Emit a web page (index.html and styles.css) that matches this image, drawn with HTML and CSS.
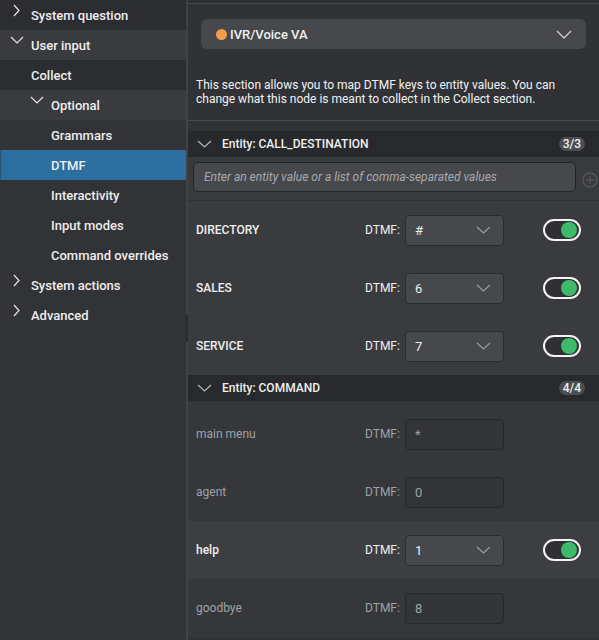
FILE: index.html
```html
<!DOCTYPE html>
<html lang="en">
<head>
    <meta charset="UTF-8">
    <meta name="viewport" content="width=device-width, initial-scale=1.0">
    <title>DTMF mapping</title>
    <link rel="stylesheet" href="styles.css">
</head>
<body>
<div class="app">
    <div class="sidebar">
        <div class="nav-item band-dark lvl-1">
            <span class="caret"><svg class="caret-right" width="7" height="13" viewBox="0 0 7 13"><polyline points="1,1 6,6.5 1,12"/></svg></span>
            System question
        </div>
        <div class="nav-item band-light lvl-1">
            <span class="caret"><svg class="caret-down" width="14" height="8" viewBox="0 0 14 8"><polyline points="1,1 7,7 13,1"/></svg></span>
            User input
        </div>
        <div class="nav-item band-dark lvl-2">Collect</div>
        <div class="nav-item band-light lvl-2b">
            <span class="caret"><svg class="caret-down" width="14" height="8" viewBox="0 0 14 8"><polyline points="1,1 7,7 13,1"/></svg></span>
            Optional
        </div>
        <div class="nav-item lvl-3">Grammars</div>
        <div class="nav-item lvl-3 selected">DTMF</div>
        <div class="nav-item lvl-3">Interactivity</div>
        <div class="nav-item lvl-3">Input modes</div>
        <div class="nav-item lvl-3">Command overrides</div>
        <div class="nav-item lvl-1">
            <span class="caret"><svg class="caret-right" width="7" height="13" viewBox="0 0 7 13"><polyline points="1,1 6,6.5 1,12"/></svg></span>
            System actions
        </div>
        <div class="nav-item lvl-1">
            <span class="caret"><svg class="caret-right" width="7" height="13" viewBox="0 0 7 13"><polyline points="1,1 6,6.5 1,12"/></svg></span>
            Advanced
        </div>
        <span class="scroll-thumb"></span>
    </div>

    <div class="main">
        <div class="panel">
            <div class="intro">
                <div class="channel">
                    <span class="dot"></span>
                    <span class="channel-name">IVR/Voice VA</span>
                    <svg class="channel-caret" width="16" height="9" viewBox="0 0 16 9"><polyline points="1,1 8,8 15,1"/></svg>
                </div>
                <p class="desc">This section allows you to map DTMF keys to entity values. You can<br>change what this node is meant to collect in the Collect section.</p>
            </div>

            <div class="entity-header">
                <svg class="entity-caret" width="15" height="8" viewBox="0 0 15 8"><polyline points="1,1 7.5,7 14,1"/></svg>
                <span class="entity-title">Entity: CALL_DESTINATION</span>
                <span class="badge">3/3</span>
            </div>
            <div class="value-bar">
                <input class="value-input" type="text" placeholder="Enter an entity value or a list of comma-separated values">
                <svg class="add-icon" width="16" height="16" viewBox="0 0 16 16">
                    <circle cx="8" cy="8" r="7"/>
                    <line x1="8" y1="4" x2="8" y2="12"/>
                    <line x1="4" y1="8" x2="12" y2="8"/>
                </svg>
            </div>
            <div class="rows rows-dest">
                <div class="row">
                    <span class="row-label">DIRECTORY</span>
                    <span class="dtmf-label">DTMF:</span>
                    <div class="key-select"><span>#</span><svg width="15" height="8" viewBox="0 0 15 8"><polyline points="1,1 7.5,7 14,1"/></svg></div>
                    <span class="toggle"><span class="knob"></span></span>
                </div>
                <div class="row">
                    <span class="row-label">SALES</span>
                    <span class="dtmf-label">DTMF:</span>
                    <div class="key-select"><span>6</span><svg width="15" height="8" viewBox="0 0 15 8"><polyline points="1,1 7.5,7 14,1"/></svg></div>
                    <span class="toggle"><span class="knob"></span></span>
                </div>
                <div class="row">
                    <span class="row-label">SERVICE</span>
                    <span class="dtmf-label">DTMF:</span>
                    <div class="key-select"><span>7</span><svg width="15" height="8" viewBox="0 0 15 8"><polyline points="1,1 7.5,7 14,1"/></svg></div>
                    <span class="toggle"><span class="knob"></span></span>
                </div>
            </div>

            <div class="entity-header">
                <svg class="entity-caret" width="15" height="8" viewBox="0 0 15 8"><polyline points="1,1 7.5,7 14,1"/></svg>
                <span class="entity-title">Entity: COMMAND</span>
                <span class="badge">4/4</span>
            </div>
            <div class="rows rows-command">
                <div class="row off">
                    <span class="row-label">main menu</span>
                    <span class="dtmf-label">DTMF:</span>
                    <div class="key-box">*</div>
                </div>
                <div class="row off">
                    <span class="row-label">agent</span>
                    <span class="dtmf-label">DTMF:</span>
                    <div class="key-box">0</div>
                </div>
                <div class="row on">
                    <span class="row-label">help</span>
                    <span class="dtmf-label">DTMF:</span>
                    <div class="key-select"><span>1</span><svg width="15" height="8" viewBox="0 0 15 8"><polyline points="1,1 7.5,7 14,1"/></svg></div>
                    <span class="toggle"><span class="knob"></span></span>
                </div>
                <div class="row off">
                    <span class="row-label">goodbye</span>
                    <span class="dtmf-label">DTMF:</span>
                    <div class="key-box">8</div>
                </div>
            </div>
        </div>
    </div>
</div>
</body>
</html>
```

FILE: styles.css
```css
body {
    margin: 0;
    background-color: #2e2f33;
    font-family: Roboto, "Liberation Sans", Arial, sans-serif;
    color: #f0f0f0;
    overflow: hidden;
}
.app {
    display: flex;
    width: 599px;
    height: 640px;
    overflow: hidden;
}

/* left tree */
.sidebar {
    position: relative;
    width: 188px;
    flex-shrink: 0;
    background-color: #323337;
    border-right: 2px solid #414246;
    box-sizing: border-box;
}
.scroll-thumb {
    position: absolute;
    right: -2px;
    top: 315px;
    width: 2px;
    height: 27px;
    background-color: #2a2b2e;
}
.nav-item {
    display: flex;
    align-items: center;
    height: 30px;
    font-size: 13px;
    font-weight: 500;
    color: #eeeeee;
    white-space: nowrap;
}
.band-dark {
    background-color: #2c2d31;
}
.band-light {
    background-color: #3a3b3f;
}
.lvl-1 {
    padding-left: 11px;
}
.lvl-2 {
    padding-left: 31px;
}
.lvl-2b {
    padding-left: 31px;
}
.lvl-3 {
    padding-left: 51px;
}
.nav-item.selected {
    background-color: #2a6f9f;
    border-left: 1px solid #21567a;
    padding-left: 50px;
}
.caret {
    display: flex;
    align-items: center;
    width: 20px;
    height: 30px;
}
.caret svg {
    fill: none;
    stroke: #e6e6e6;
    stroke-width: 1.2;
    margin-bottom: 10px;
}
.caret-right {
    margin-left: 2px;
}
.caret-down {
    margin-left: -1px;
}

/* right panel */
.main {
    flex: 1;
    padding-top: 3px;
}
.panel {
    height: 100%;
    background-color: #313236;
    border-top: 1px solid #48494d;
}
.intro {
    padding: 15px 14px 0 13px;
    height: 101px;
    border-bottom: 1px solid #4a4b4f;
    margin-bottom: 10px;
}
.channel {
    display: flex;
    align-items: center;
    height: 30px;
    padding: 0 14px 0 15px;
    background-color: #46484c;
    border-radius: 6px;
}
.dot {
    width: 11px;
    height: 11px;
    border-radius: 50%;
    background-color: #f39c4a;
    margin-right: 3px;
}
.channel-name {
    flex: 1;
    font-size: 13px;
    font-weight: 500;
}
.channel-caret {
    fill: none;
    stroke: #cfcfcf;
    stroke-width: 1.3;
}
.desc {
    margin: 29px 0 0 -5px;
    font-size: 12px;
    line-height: 14px;
    color: #f2f2f2;
}

.entity-header {
    display: flex;
    align-items: center;
    height: 26px;
    padding: 0 15px 0 9px;
    background-color: #28292c;
}
.entity-caret {
    fill: none;
    stroke: #b5b7ba;
    stroke-width: 1.2;
    margin-right: 10px;
}
.entity-title {
    flex: 1;
    font-size: 12px;
    font-weight: 500;
}
.badge {
    padding: 0 4px;
    height: 14px;
    line-height: 14px;
    border-radius: 7px;
    background-color: #4b4d51;
    font-size: 12px;
    font-weight: 500;
}

.value-bar {
    display: flex;
    align-items: flex-start;
    gap: 6px;
    height: 44px;
    padding: 5px 2px 0 5px;
    box-sizing: border-box;
    background-color: #393a3e;
    border-bottom: 1px solid #303135;
}
.value-input {
    width: 383px;
    height: 30px;
    box-sizing: border-box;
    padding: 0 10px;
    border: 1px solid #222326;
    border-radius: 5px;
    background-color: #46484c;
    color: #eeeeee;
    font-family: inherit;
    font-size: 12px;
}
.value-input::placeholder {
    color: #a8aaae;
    font-style: italic;
}
.add-icon {
    margin-top: 10px;
    fill: none;
    stroke: #55575b;
    stroke-width: 1.3;
}

.rows-dest {
    background-color: #3a3b3f;
}
.rows-command {
    padding-top: 4px;
    background-color: #36373b;
}
.row {
    display: flex;
    align-items: center;
    height: 58px;
    padding-left: 8px;
    font-size: 12px;
}
.row-label {
    width: 169px;
    font-weight: 500;
}
.dtmf-label {
    width: 40px;
}
.row.off {
    color: #9ea2a7;
}
.row.off .row-label {
    font-weight: 400;
}
.row.on {
    background-color: #3d3e42;
}
.key-select,
.key-box {
    display: flex;
    align-items: center;
    width: 99px;
    height: 31px;
    box-sizing: border-box;
    padding: 0 12px 0 9px;
    border: 1px solid #2a2b2e;
    border-radius: 4px;
    font-size: 13px;
}
.key-select {
    background-color: #46484c;
}
.key-select span {
    flex: 1;
}
.key-select svg {
    fill: none;
    stroke: #9a9ca0;
    stroke-width: 1.2;
}
.key-box {
    background-color: #333438;
    border-color: #27282b;
}
.toggle {
    display: flex;
    justify-content: flex-end;
    align-items: center;
    margin-left: 39px;
    width: 38px;
    height: 22px;
    box-sizing: border-box;
    padding: 0 2px;
    border: 2px solid #f4f4f4;
    border-radius: 11px;
    background-color: #2f3034;
}
.knob {
    width: 16px;
    height: 16px;
    border-radius: 50%;
    background-color: #3dbb6b;
}
```
